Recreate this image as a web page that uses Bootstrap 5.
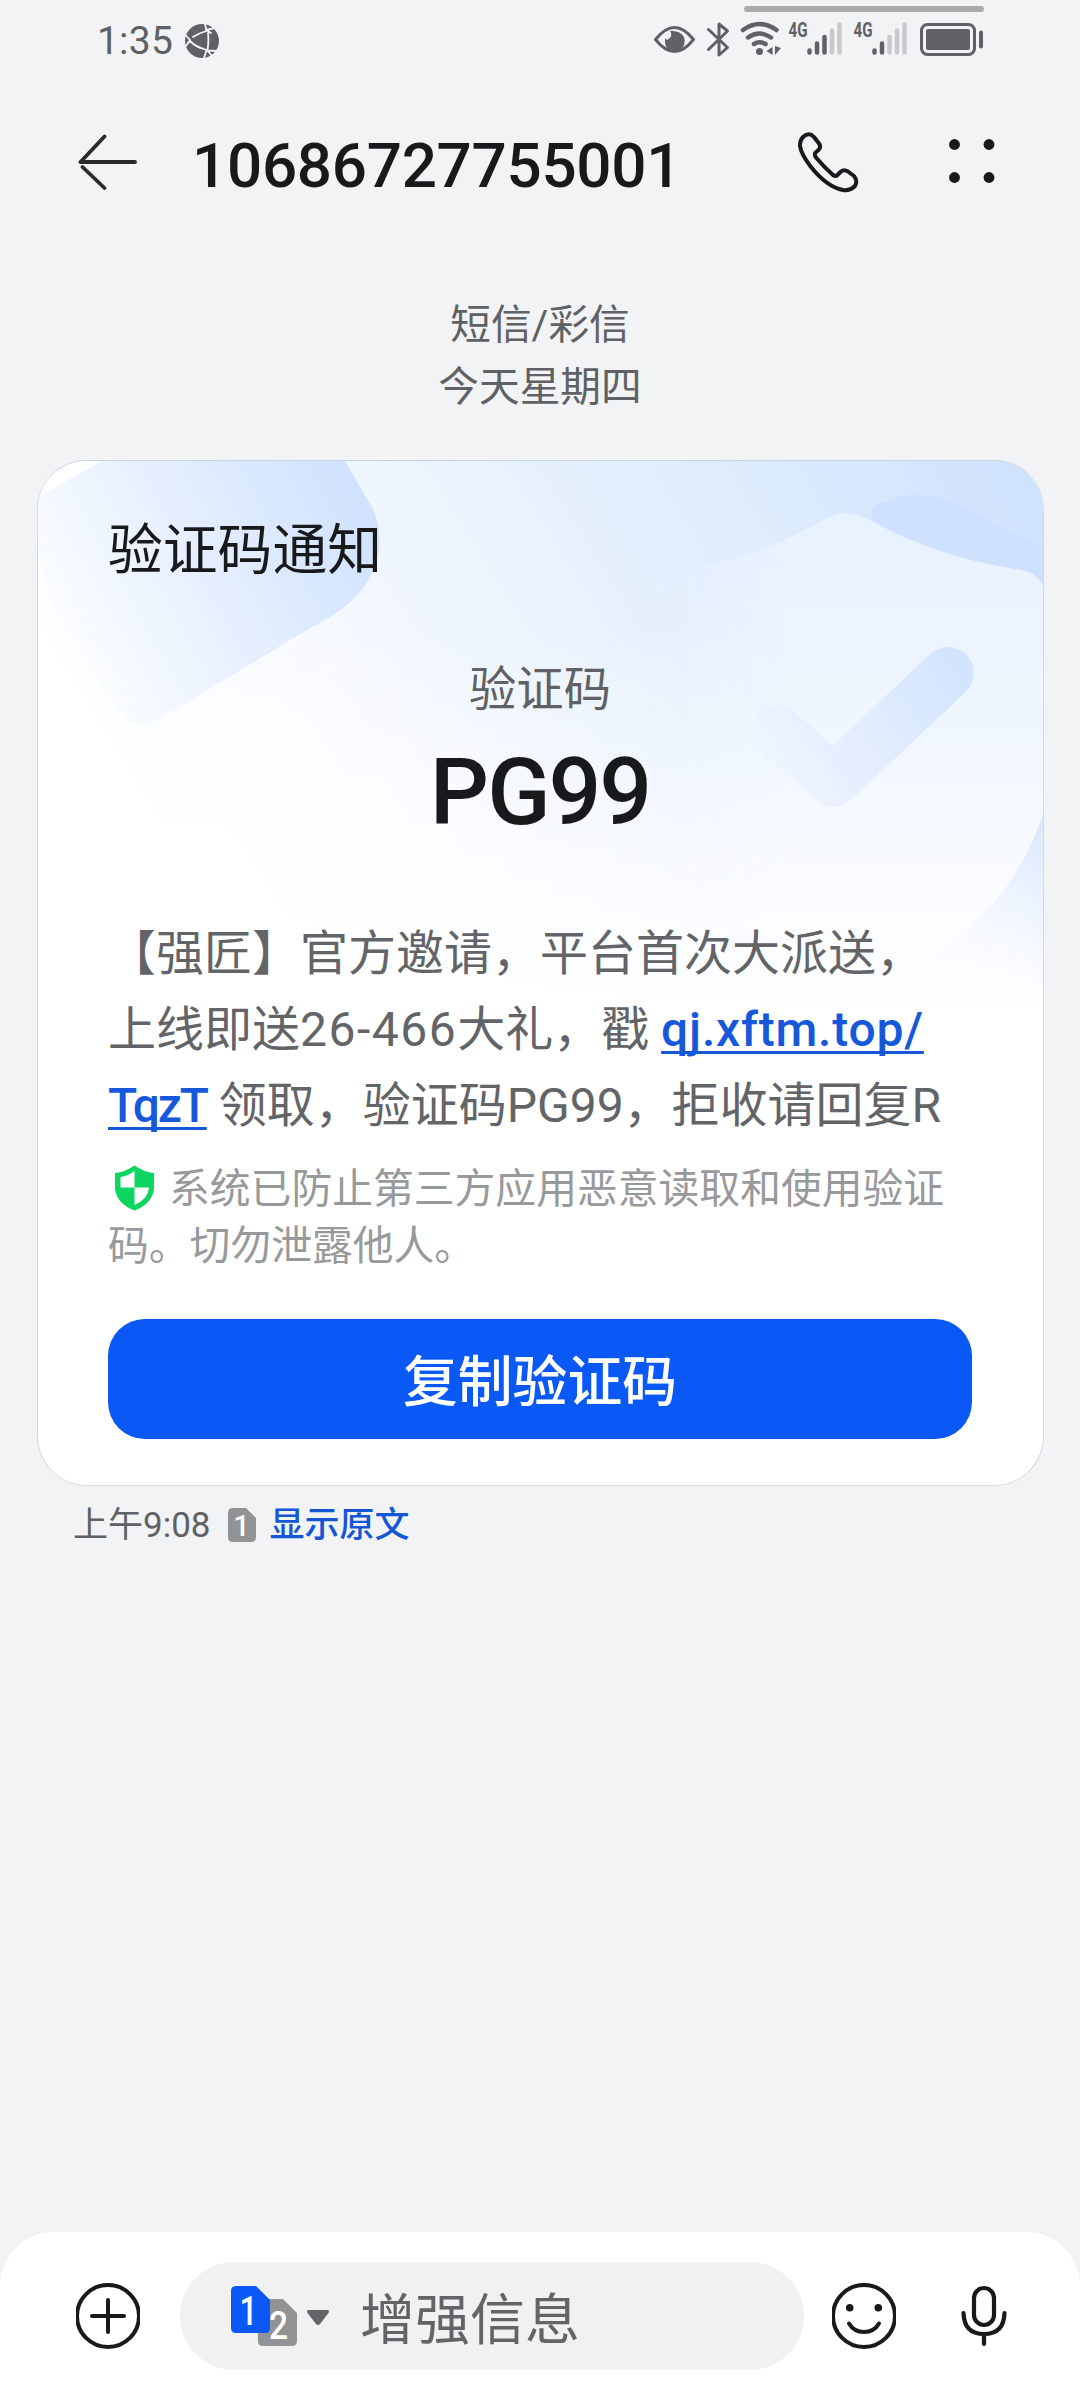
<!DOCTYPE html>
<html lang="zh-CN">
<head>
<meta charset="utf-8">
<meta name="viewport" content="width=device-width, initial-scale=1">
<title>10686727755001</title>
<link href="https://cdn.jsdelivr.net/npm/bootstrap@5.3.0/dist/css/bootstrap.min.css" rel="stylesheet">
<style>
body{background:#f1f3f5;font-family:Roboto,"Noto Sans CJK SC",sans-serif;color:#17191b}
svg{display:block;flex:none}
.phone{width:1080px;height:2400px;overflow:hidden}
.status{height:82px;padding:0 82px 0 97px}
.clock{font-size:39px;line-height:82px;color:#5f6164;letter-spacing:.2px}
.clock-gap{gap:11px}
.bar-top{height:160px;padding:0 80px 0 78px}
.number{font-size:62px;line-height:84px;font-weight:500;letter-spacing:-.3px;margin:7px 0 0 54px}
.actions{gap:88px}
.stamp{font-size:40.7px;line-height:62px;color:#5f6164;padding-top:52px;height:218px}
.notice{width:1007px;height:1026px;margin-left:37px;border:1px solid #d5dae0;border-top-color:#c5d3e2;border-bottom-color:#dde0e3;border-radius:50px;background:#fff;overflow:hidden}
.decor{left:0;top:0}
.inner{padding:54px 71px 0 70px}
.notice h1{font-size:54.8px;line-height:70px;font-weight:400;margin:0}
.label{font-size:47.3px;line-height:60px;color:#5f6164;margin-top:75px}
.code{font-size:93px;line-height:100px;font-weight:500;margin-top:23px;letter-spacing:-2px}
.msg{font-size:48px;line-height:76px;color:#636467;margin-top:73px;white-space:nowrap}
.msg a{color:#1758da;text-decoration-thickness:3px;text-underline-offset:5px;text-decoration-skip-ink:none;font-weight:500}
.wide{letter-spacing:1.5px}
.u1{letter-spacing:.8px}
.u2{letter-spacing:-2.2px}
.hint{font-size:40.8px;line-height:56.500px;color:#98999b;margin-top:17px;white-space:nowrap}
.hint svg{display:inline-block;vertical-align:-8px;margin:0 14px 0 6px}
.copy{height:120px;margin-top:45px;border:0;border-radius:37px;background:#0a59f7;font-size:54.8px;line-height:70px;font-weight:500;padding:5px 0 0;color:#fff}
.meta-row{padding:15px 0 0 73px;font-size:35px;line-height:50px;color:#5f6164}
.meta-row a{color:#1456d4;font-weight:500}
.meta-row svg{margin:-3px 14px 0 17px}
.composer{height:168px;background:#fff;border-radius:54px 54px 0 0;padding:30px 70px 0 76px}
.field{width:624px;height:108px;border-radius:54px;background:#f1f1f2;padding-left:51px;margin-left:40px;font-size:55px;color:#636467}
.field span{margin:8px 0 0 31px;line-height:70px}
.smile{margin-left:28px}
</style>
</head>
<body>
<main class="phone d-flex flex-column">
  <div class="status d-flex justify-content-between align-items-start">
    <div class="d-flex align-items-center clock-gap">
      <div class="clock">1:35</div>
      <svg width="36" height="36" viewBox="0 0 36 36"><circle cx="18" cy="18" r="17" fill="#5f6164"/><g fill="none" stroke="#f1f3f5" stroke-width="1.8" stroke-linecap="round"><path d="M21 1L22.500 8Q15 10 9 14M1.500 12L6 17L2 23M6 18Q12 24 20 26M24 10Q25 18 23.500 27M22 7L29 5.500M22.500 7L27 10M20 35L22.500 27.500L34 28M23 27L28 33M22.500 27L17 25"/></g></svg>
    </div>
    <svg width="346" height="64" viewBox="652 0 346 64">
      <rect x="744" y="6" width="240" height="6" rx="3" fill="#a9abac"/>
      <g fill="none" stroke="#5f6164" stroke-width="3" stroke-linecap="round" stroke-linejoin="round">
        <path d="M655.500 39.500Q674.500 15.500 693.500 39.500Q674.500 63.500 655.500 39.500Z"/>
        <path d="M708.500 29.500L727.500 47.500L719 55V24L727.500 31L708.500 49.500"/>
        <g stroke-width="4.500"><path d="M743 30Q759.500 18 776.500 30M748 37.500Q759.500 29.500 771 37.500M754 44Q759.500 40.500 765.500 44"/></g>
        <rect x="921.500" y="24.500" width="53" height="30" rx="6"/>
      </g>
      <path d="M670 31Q674 36 667 40L665 38Q664 52 676 51Q687 48 684 37Q680 30 670 31Z" fill="#5f6164"/>
      <g fill="#5f6164"><circle cx="759.500" cy="51.500" r="3.500"/><path d="M772.500 47V55L766.500 51ZM775 46V55L781 48Z"/>
      <rect x="926" y="29" width="44" height="21" rx="2"/><rect x="979" y="30.500" width="4" height="18" rx="2"/></g>
      <g font-family="Roboto" font-weight="700" font-size="20" fill="#5f6164"><text x="788.500" y="36.500" textLength="19" lengthAdjust="spacingAndGlyphs">4G</text><text x="853.500" y="36.500" textLength="19" lengthAdjust="spacingAndGlyphs">4G</text></g>
      <g stroke-width="4.500" stroke-linecap="round"><path stroke="#5f6164" d="M809.500 50.500V52.500M817 43.500V52.500M824.500 37V52.500M874.500 50.500V52.500M882 43.500V52.500"/><path stroke="#c7c9cb" d="M832 30.500V52.500M839.500 24.500V52.500M889.500 37V52.500M897 30.500V52.500M904.500 24.500V52.500"/></g>
    </svg>
  </div>

  <header class="bar-top d-flex align-items-center">
    <svg width="60" height="60" viewBox="0 0 60 60" fill="none" stroke="#292b2d" stroke-width="3.800" stroke-linecap="round" stroke-linejoin="round"><path d="M26.500 4.500L2.500 30H57M4.500 35L26.500 56"/></svg>
    <div class="number">10686727755001</div>
    <div class="actions d-flex align-items-center ms-auto">
      <svg width="64" height="64" viewBox="796 130 64 64" fill="none" stroke="#17191b" stroke-width="4" stroke-linejoin="round"><path d="M803 137Q809 131.500 814 137L819 143.500Q821.500 147 818.500 150L815.500 152.500Q814 154.500 816 157.500Q824 167 833 175Q836 177 838 174.500L841 171.500Q844 169 848 171.500L854 176Q858 181 855 186Q850 191 843 190Q827 187 811 167Q801 154 800 146Q800 140 803 137Z"/></svg>
      <svg width="52" height="52" viewBox="948 136 52 52" fill="#17191b"><circle cx="954.500" cy="144.500" r="5.400"/><circle cx="989" cy="144.500" r="5.400"/><circle cx="954.500" cy="177.500" r="5.400"/><circle cx="989" cy="177.500" r="5.400"/></svg>
    </div>
  </header>

  <div class="stamp text-center">短信/彩信<br>今天星期四</div>

  <section class="notice position-relative flex-shrink-0">
    <svg class="decor position-absolute" width="1005" height="560" viewBox="0 0 1005 560">
      <defs>
        <linearGradient id="sky" gradientUnits="userSpaceOnUse" x1="150" y1="480" x2="950" y2="-20"><stop offset="0" stop-color="#fff"/><stop offset=".24" stop-color="#f9fbff"/><stop offset=".42" stop-color="#eff5fe"/><stop offset=".67" stop-color="#e2eefd"/><stop offset="1" stop-color="#d0e3fe"/></linearGradient>
        <linearGradient id="sink" x1="0" y1="0" x2="0" y2="1"><stop offset=".3" stop-color="#fff" stop-opacity="0"/><stop offset="1" stop-color="#fff"/></linearGradient>
        <linearGradient id="leaf" gradientUnits="userSpaceOnUse" x1="330" y1="40" x2="40" y2="200"><stop offset="0" stop-color="#cfe2fe"/><stop offset=".5" stop-color="#e4eefe"/><stop offset="1" stop-color="#fbfdff"/></linearGradient>
        <linearGradient id="guard" x1="0" y1="0" x2="0" y2="1"><stop offset="0" stop-color="#e8f1ff"/><stop offset=".45" stop-color="#f0f6ff"/><stop offset="1" stop-color="#fefeff"/></linearGradient>
        <linearGradient id="tick" gradientUnits="userSpaceOnUse" x1="920" y1="200" x2="735" y2="320"><stop offset="0" stop-color="#d2e4fe"/><stop offset=".7" stop-color="#e7effe"/><stop offset="1" stop-color="#eff4ff"/></linearGradient>
        <linearGradient id="edge" gradientUnits="userSpaceOnUse" x1="1005" y1="370" x2="920" y2="490"><stop offset="0" stop-color="#dbe8ff"/><stop offset="1" stop-color="#f6f9ff" stop-opacity="0"/></linearGradient>
        <linearGradient id="fadein" x1="0" y1="0" x2="1" y2="0"><stop offset="0" stop-color="#fff" stop-opacity="0"/><stop offset=".4" stop-color="#fff"/></linearGradient>
        <mask id="soft"><rect x="600" width="405" height="560" fill="url(#fadein)"/></mask>
      </defs>
      <rect width="1005" height="560" fill="url(#sky)"/>
      <rect width="1005" height="560" fill="url(#sink)"/>
      <path d="M64 0H307L335 48Q350 85 331 118Q316 145 274 166L125 256Q98 274 84 254L24 170Q-5 110 0 34Z" fill="url(#leaf)"/>
      <path d="M0 0H64L0 36Z" fill="#fff"/>
      <path d="M833 47Q882 20 930 48L1005 87V124Q996 111 984 109Q900 96 835 60Z" fill="#cbdffe" opacity=".75"/>
      <path d="M1005 350V540L850 520Q970 460 1005 350Z" fill="url(#edge)"/>
      <g mask="url(#soft)"><path d="M612 114Q700 104 767 69Q795 52 808 52Q820 52 835 61Q900 97 984 109Q998 112 1005 124V353Q970 460 860 515Q612 470 612 301Z" fill="url(#guard)"/></g>
      <path d="M739 270L795 320L910 212" fill="none" stroke="url(#tick)" stroke-width="52" stroke-linecap="round" stroke-linejoin="round"/>
    </svg>
    <div class="inner position-relative d-flex flex-column">
      <h1>验证码通知</h1>
      <div class="label text-center">验证码</div>
      <div class="code text-center">PG99</div>
      <div class="msg">【强匠】官方邀请，平台首次大派送，<br>上线即送<span class="wide">26-466</span>大礼，戳 <a href="#" class="u1">qj.xftm.top/</a><br><a href="#" class="u2">TqzT</a> 领取，验证码PG99，拒收请回复R</div>
      <div class="hint"><svg width="41" height="46" viewBox="0 0 41 46"><path d="M20.500 .5Q30 7 40 8V24Q38 39 20.500 45.500Q3 39 1 24V8Q11 7 20.500 .5Z" fill="#0dd561"/><path d="M20.500 6V22.500H6.500V12Q14 11 20.500 6ZM20.500 22.500H35Q34 34 20.500 40Z" fill="#fff"/></svg>系统已防止第三方应用恶意读取和使用验证<br>码。切勿泄露他人。</div>
      <button class="btn copy w-100" type="button">复制验证码</button>
    </div>
  </section>

  <div class="meta-row d-flex align-items-center">
    <span>上午9:08</span>
    <svg width="28" height="34" viewBox="0 0 28 34"><path d="M5 0H18L28 10V29Q28 34 23 34H5Q0 34 0 29V5Q0 0 5 0Z" fill="#929395"/><text x="13.500" y="27.500" text-anchor="middle" font-family="Roboto" font-weight="500" font-size="29" fill="#fff">1</text></svg>
    <a href="#" class="text-decoration-none">显示原文</a>
  </div>

  <footer class="composer d-flex align-items-start mt-auto">
    <svg width="64" height="108" viewBox="0 0 64 108" fill="none" stroke="#17191b" stroke-width="4" stroke-linecap="round"><circle cx="32" cy="54" r="31"/><path d="M16 54H48M32 38V70"/></svg>
    <div class="field d-flex align-items-center">
      <svg width="98" height="62" viewBox="231 2285 98 62"><path d="M263 2299H283L297 2313V2341Q297 2346 292 2346H263Q258 2346 258 2341V2304Q258 2299 263 2299Z" fill="#929395"/><path d="M236 2286H256L270 2300V2328Q270 2333 265 2333H236Q231 2333 231 2328V2291Q231 2286 236 2286Z" fill="#0a59f7"/><g fill="#fff" font-family="Roboto" font-weight="500" text-anchor="middle"><text x="248.500" y="2325" font-size="41" textLength="18" lengthAdjust="spacingAndGlyphs">1</text><text x="278.500" y="2338.500" font-size="39" textLength="19" lengthAdjust="spacingAndGlyphs">2</text></g><path d="M309 2310H327Q330 2310 328.500 2313L320 2324Q318 2326 316 2324L307.500 2313Q306 2310 309 2310Z" fill="#636467"/></svg>
      <span>增强信息</span>
    </div>
    <svg class="smile" width="64" height="108" viewBox="0 0 64 108" fill="none" stroke="#17191b" stroke-width="4" stroke-linecap="round"><circle cx="32" cy="54" r="31"/><path d="M17 61.500Q22 70 32 70Q42 70 47 61.500"/><g fill="#17191b" stroke="none"><circle cx="17.700" cy="45.700" r="3.800"/><circle cx="46.300" cy="45.700" r="3.800"/></g></svg>
    <svg class="ms-auto" width="52" height="108" viewBox="958 2262 52 108" fill="none" stroke="#17191b" stroke-width="4.200" stroke-linecap="round"><rect x="974" y="2288" width="20" height="37" rx="10"/><path d="M963.500 2313Q964 2334 984 2334Q1004 2334 1004.500 2313M984 2334V2344"/></svg>
  </footer>
</main>
<script src="https://cdn.jsdelivr.net/npm/bootstrap@5.3.0/dist/js/bootstrap.bundle.min.js"></script>
</body>
</html>
